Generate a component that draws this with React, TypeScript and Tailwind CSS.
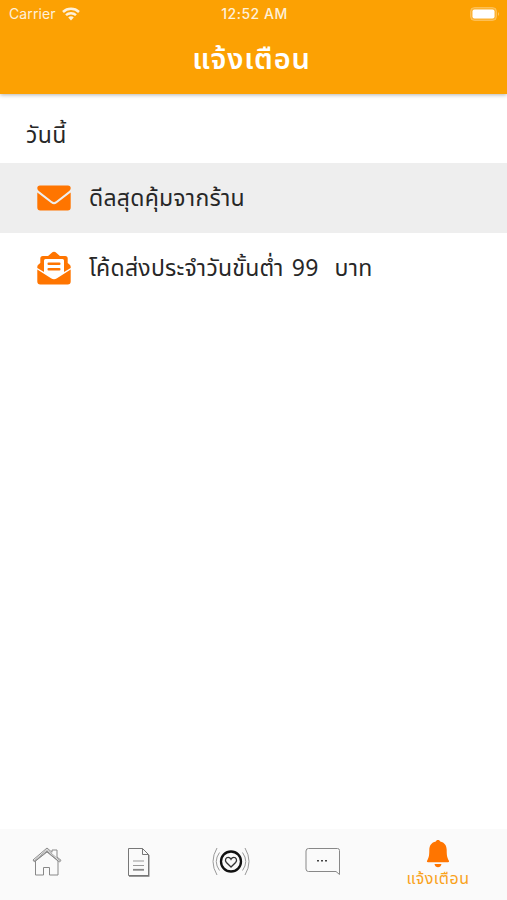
import type { ReactNode } from 'react';
import { clsx } from 'clsx';

const THAI_FONT = 'font-["Noto_Sans_Thai","Noto_Sans","Open_Sans",sans-serif]';

interface Notification {
  icon: ReactNode;
  title: string;
  unread: boolean;
}

const notifications: Notification[] = [
  { icon: <EnvelopeIcon />, title: 'ดีลสุดคุ้มจากร้าน', unread: true },
  { icon: <OpenEnvelopeIcon />, title: 'โค้ดส่งประจำวันขั้นต่ำ 99  บาท', unread: false },
];

export default function App() {
  return (
    <div className={clsx('flex h-[900px] w-[507px] flex-col overflow-hidden bg-white', THAI_FONT)}>
      <header className="z-10 h-[94px] shrink-0 bg-[#fca103] text-white shadow-[0_1px_4px_rgba(0,0,0,0.3)]">
        <StatusBar />
        <h1 className="flex h-[67px] items-center justify-center pr-1 text-[29px] font-semibold tracking-[0.8px] whitespace-nowrap">
          แจ้งเตือน
        </h1>
      </header>
      <main className="flex-1 text-[#272727]">
        <h2 className="flex h-[69px] items-center pt-[15px] pl-[26px] text-[23px] leading-none tracking-[0.4px]">
          วันนี้
        </h2>
        {notifications.map((item) => (
          <NotificationRow key={item.title} {...item} />
        ))}
      </main>
      <TabBar />
    </div>
  );
}

function StatusBar() {
  return (
    <div className="grid h-[27px] grid-cols-3 items-center pr-[7px] pl-[9px] font-[Inter,sans-serif] text-[14px]">
      <div className="flex items-center gap-1.5 opacity-85">
        <span className="tracking-[0.1px]">Carrier</span>
        <svg width="18" height="14" viewBox="0 0 18 14" fill="none" stroke="white" strokeWidth="2.5">
          <path d="M1 5C5.5 .8 12.5 .8 17 5" />
          <path d="M4 8.2c2.8-2.6 7.2-2.6 10 0" />
          <path d="M6.2 10.4c1.6-1.4 4-1.4 5.6 0L9 13.6z" fill="white" stroke="none" />
        </svg>
      </div>
      <span className="text-center font-medium tracking-[0.5px] opacity-85">12:52 AM</span>
      <svg className="justify-self-end" width="30" height="14" viewBox="0 0 30 14">
        <rect x="0.5" y="0.5" width="26" height="13" rx="4" fill="white" fillOpacity="0.2" stroke="white" strokeOpacity="0.25" />
        <rect x="2.5" y="2.5" width="22" height="9" rx="2" fill="white" />
        <path d="M28 5q2 2 0 4z" fill="white" fillOpacity="0.4" />
      </svg>
    </div>
  );
}

function NotificationRow({ icon, title, unread }: Notification) {
  return (
    <div className={clsx('flex h-[70px] items-center gap-[18px] pl-[37px]', unread && 'bg-[#eeeeee]')}>
      {icon}
      <span className="pt-[3px] text-[23px] leading-none tracking-[0.25px] [word-spacing:1.8px] whitespace-pre">
        {title}
      </span>
    </div>
  );
}

function TabBar() {
  return (
    <nav className="grid h-[71px] shrink-0 grid-cols-[93px_92px_92px_92px_138px] bg-[#fafafa] text-[#777]">
      <div className="flex justify-center pt-[18px]">
        <HomeIcon />
      </div>
      <div className="flex justify-center pt-[19px]">
        <DocumentIcon />
      </div>
      <div className="flex justify-center pt-[18px]">
        <HeartSignalIcon />
      </div>
      <div className="flex justify-center pt-[19px]">
        <ChatIcon />
      </div>
      <div className="flex flex-col items-center pt-[11px]">
        <BellIcon />
        <span className="mt-px text-[16px] leading-5 tracking-[0.5px] whitespace-nowrap text-[#f9a21b]">แจ้งเตือน</span>
      </div>
    </nav>
  );
}

function EnvelopeIcon() {
  return (
    <svg width="34" height="26" viewBox="0 0 34 26" fill="#ff7500">
      <path d="M3 .5h28c1.700 0 2.700 1 2.700 2.500 0 1.500-.8 2.500-2.200 3.500L19 16.300c-1.500 1.100-2.500 1.100-4 0L2.500 6.500C1.100 5.500.3 4.500.3 3 .3 1.500 1.300.5 3 .5z" />
      <path d="M.3 7.500 14 18c2.200 1.600 3.800 1.600 6 0L33.700 7.500V22.500a3 3 0 0 1-3 3H3.300a3 3 0 0 1-3-3z" />
    </svg>
  );
}

function OpenEnvelopeIcon() {
  return (
    <svg width="34" height="34" viewBox="0 0 34 34" fill="#ff7500">
      <path d="M.3 17v-1.200q0-1.300 1.200-2.200L3.300 12V7.400q0-2.500 2.500-2.500h5.300L14.500 1.900q2.500-2.200 5 0L22.900 4.900h5.300q2.500 0 2.500 2.500V12l1.800 1.600q1.200.9 1.200 2.200V17L27 21V9.500q0-1.500-1.500-1.500h-17Q7 8 7 9.500V21z" />
      <path d="M.3 18.500 14 27.300q3 1.900 6 0l13.700-8.800v12a3 3 0 0 1-3 3H3.300a3 3 0 0 1-3-3z" />
      <rect x="10.500" y="11.400" width="13" height="2.600" rx="1" />
      <rect x="10.500" y="17" width="13" height="2.600" rx="1" />
    </svg>
  );
}

function HomeIcon() {
  return (
    <svg width="30" height="30" viewBox="0 0 30 30" fill="none" stroke="#888" strokeWidth="1">
      <path d="M1 13 15 1l5 4.300V3h5v7l4 3.300-1.500 1.700L15 4.200 2.300 14.800z" />
      <path d="M2 14 15 2.700 28.300 14" strokeWidth="0.700" />
      <path d="M3.500 14v14h8v-7.500h6V28h8.500V14L15 5z" />
    </svg>
  );
}

function DocumentIcon() {
  return (
    <svg width="22" height="29" viewBox="0 0 22 29" fill="none" stroke="currentColor" strokeWidth="1">
      <path d="M.5.5h14l6 6v21H.500z" />
      <path d="M14.500.5v6h6" />
      <path d="M20.800 7v21H1" strokeWidth="1.300" />
      <path d="M5 13h11M5 17.500h11" stroke="#999" />
      <path d="M5 21.800h11" stroke="#888" strokeWidth="1.800" />
    </svg>
  );
}

function HeartSignalIcon() {
  return (
    <svg width="38" height="29" viewBox="0 0 38 29" fill="none" stroke="#999" strokeWidth="1">
      <path d="M5 1Q-3 14.500 5 28M7.500 5.500Q1 14.500 7.500 23.500M33 1q8 13.500 0 27M30.500 5.500q6.500 9 0 18" />
      <circle cx="19" cy="14.500" r="10" stroke="#111" strokeWidth="2.300" />
      <path d="m19 20-4.600-4.500c-2-2.200-.5-5.200 1.800-5.200 1.500 0 2.300.9 2.800 1.900.5-1 1.300-1.900 2.800-1.900 2.300 0 3.800 3 1.800 5.200z" stroke="#333" strokeWidth="1.300" />
    </svg>
  );
}

function ChatIcon() {
  return (
    <svg width="36" height="28" viewBox="0 0 36 28" fill="none" stroke="#888" strokeWidth="1">
      <path d="M3.500.5h29q2 0 2 2v24l-3.500-3H3.500q-2.500 0-2.500-2.500V3Q1 .5 3.500.5z" />
      <path d="M12 12.800h2m2 0h2m2 0h2" stroke="#444" strokeWidth="1.600" />
    </svg>
  );
}

function BellIcon() {
  return (
    <svg width="24" height="28" viewBox="0 0 24 28" fill="#ff7500">
      <path d="M12 0c1.300 0 1.900.6 2.200 1.500C18.500 2.400 20.700 5.500 20.700 10c0 5.500.4 7.500 2.100 10.500.6 1 .2 1.700-.8 1.700H2c-1 0-1.400-.7-.8-1.700C2.900 17.500 3.300 15.500 3.300 10c0-4.500 2.200-7.600 6.500-8.500C10.100.6 10.700 0 12 0z" />
      <path d="M8.500 24h7q-.8 3.200-3.500 3.200T8.500 24z" />
    </svg>
  );
}
